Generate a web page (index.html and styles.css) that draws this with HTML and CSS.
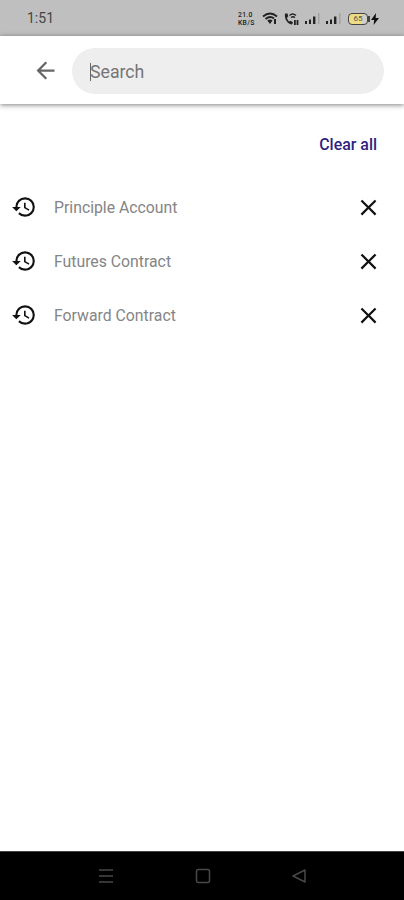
FILE: index.html
```html
<!DOCTYPE html>
<html lang="en">
<head>
<meta charset="utf-8">
<title>Search</title>
<link rel="stylesheet" href="styles.css">
</head>
<body>
<svg class="defs" aria-hidden="true">
  <symbol id="history" viewBox="0 0 24 24"><path d="M13 3a9 9 0 0 0-9 9H1l3.89 3.89.07.14L9 12H6c0-3.87 3.13-7 7-7s7 3.13 7 7-3.13 7-7 7c-1.93 0-3.68-.79-4.94-2.06l-1.42 1.42A8.95 8.95 0 0 0 13 21a9 9 0 0 0 0-18zm-1 5v5l4.28 2.54.72-1.21-3.5-2.08V8z"/></symbol>
  <symbol id="close" viewBox="0 0 24 24"><path d="M19 6.41 17.59 5 12 10.59 6.41 5 5 6.41 10.59 12 5 17.59 6.41 19 12 13.41 17.59 19 19 17.59 13.41 12z"/></symbol>
  <symbol id="signal" viewBox="0 0 16 13"><path d="M0 9h2v3H0zM4 7.500h2V12H4zM8 4.500h2.400V12H8z"/><path d="M13 1h1.500v11H13z" opacity=".18"/></symbol>
</svg>
<header class="status">
  <span class="time">1:51</span>
  <div class="indicators">
    <div class="speed"><span>21.0</span><span>KB/S</span></div>
    <svg class="wifi" viewBox="0 0 16 13"><path d="M1 4.500Q8-1.500 15 4.500M3.500 7Q8 3.200 12 6.500" fill="none" stroke="currentColor" stroke-width="1.800"/><path d="M5.300 8.500Q8 6.500 10.500 8.500L8 12zM12 7h2v5h-2z"/></svg>
    <svg class="call" viewBox="0 0 16 14"><path d="M2 1.500C1 7 5 12.500 9 12.500l1-2.200-2.500-1.500-1.300.8C5 8.500 4.200 7 4 5.500l1.300-1L4.500 1.500z"/><path d="M6.500 3.500Q9.500.5 13 3.500M8 5.500q2-1.500 4 0" fill="none" stroke="currentColor" stroke-width="1.300"/><path d="M11 8h1.800v5H11zM13.600 8h1.800v5h-1.800z"/></svg>
    <svg class="signal"><use href="#signal"/></svg>
    <svg class="signal second"><use href="#signal"/></svg>
    <div class="battery"><span>65</span></div>
    <svg class="bolt" viewBox="0 0 8 12"><path d="M5 0 0 7h3.200L2.600 12 8 5H4.700z"/></svg>
  </div>
</header>
<div class="toolbar">
  <svg class="back" viewBox="0 0 24 24"><path d="M20 11H7.830l5.590-5.590L12 4l-8 8 8 8 1.410-1.410L7.830 13H20z"/></svg>
  <div class="search"><span class="caret"></span><span>Search</span></div>
</div>
<main>
  <div class="clear">Clear all</div>
  <ul class="recent">
    <li><svg class="clock"><use href="#history"/></svg><span>Principle Account</span><svg class="remove"><use href="#close"/></svg></li>
    <li><svg class="clock"><use href="#history"/></svg><span>Futures Contract</span><svg class="remove"><use href="#close"/></svg></li>
    <li><svg class="clock"><use href="#history"/></svg><span>Forward Contract</span><svg class="remove"><use href="#close"/></svg></li>
  </ul>
</main>
<nav class="nav">
  <svg viewBox="0 0 16 16"><path d="M1 2h14M1 8h14M1 14h14"/></svg>
  <svg viewBox="0 0 16 16"><rect x="1.500" y="1.500" width="13" height="13" rx="2"/></svg>
  <svg viewBox="0 0 16 16"><path d="M14 2v12L2 8z" stroke-linejoin="round"/></svg>
</nav>
</body>
</html>
```

FILE: styles.css
```css
* { box-sizing: border-box; }
body {
  margin: 0;
  height: 900px;
  display: flex;
  flex-direction: column;
  background: #fff;
  font-family: Roboto, "Liberation Sans", sans-serif;
  overflow: hidden;
}
svg { display: block; flex: none; fill: currentColor; }
.defs { display: none; }
.status {
  height: 36px;
  flex: none;
  display: flex;
  align-items: center;
  justify-content: space-between;
  padding: 0 25px 0 27px;
  background: #bfbfbf;
  color: #222;
}
.time { font-size: 14px; color: #444; }
.indicators { display: flex; align-items: center; height: 16px; margin-top: 1px; }
.speed {
  width: 18px;
  display: flex;
  flex-direction: column;
  font-size: 6.800px;
  line-height: 8px;
  font-weight: 500;
  letter-spacing: .3px;
  margin-right: 6px;
}
.wifi { width: 16px; height: 13px; margin-right: 5px; }
.call { width: 16px; height: 14px; margin-right: 6px; }
.signal { width: 16px; height: 13px; margin-right: 5px; }
.second { margin-right: 6px; }
.battery {
  position: relative;
  width: 20px;
  height: 12px;
  border: 1.500px solid #444;
  border-radius: 4px;
  background: linear-gradient(90deg, #eddc83 70%, #d0d0c8 70%);
  font-size: 8px;
  line-height: 10px;
  text-align: center;
  color: #555;
  margin-right: 3px;
}
.battery::after {
  content: "";
  position: absolute;
  right: -3px;
  top: 2px;
  width: 2px;
  height: 6px;
  background: #444;
}
.bolt { width: 8px; height: 12px; color: #111; }
.toolbar {
  height: 68px;
  flex: none;
  display: flex;
  align-items: center;
  padding: 0 20px 0 32px;
  background: #fff;
  box-shadow: 0 1px 5px rgba(0, 0, 0, .5);
}
.back { width: 27px; height: 27px; color: #666; margin-right: 13px; }
.search {
  flex: 1;
  height: 46px;
  margin-top: 2px;
  border-radius: 23px;
  background: #eee;
  display: flex;
  align-items: center;
  padding: 2px 0 0 18px;
  font-size: 17.700px;
  color: #757575;
}
.caret { width: 1px; height: 18px; background: #666; margin-right: -1px; }
main { flex: 1; }
.clear {
  margin: 31px 27px 0 0;
  text-align: right;
  font-size: 15.900px;
  line-height: 20px;
  font-weight: 500;
  color: #30227f;
}
.recent { list-style: none; margin: 25px 0 0; padding: 0; }
.recent li {
  height: 54px;
  display: flex;
  align-items: center;
  padding: 0 22px 0 10.500px;
  font-size: 15.800px;
  color: #858585;
}
.recent span { flex: 1; }
.clock { width: 26px; height: 26px; margin-right: 17.500px; color: #111; }
.remove { width: 27px; height: 27px; color: #111; }
.nav {
  height: 49px;
  flex: none;
  display: flex;
  align-items: center;
  justify-content: space-between;
  padding: 0 97px 0 98px;
  background: #000;
  border-top: 1px solid #444;
}
.nav svg { width: 16px; height: 16px; fill: none; stroke: #484848; stroke-width: 1.500; }
```
